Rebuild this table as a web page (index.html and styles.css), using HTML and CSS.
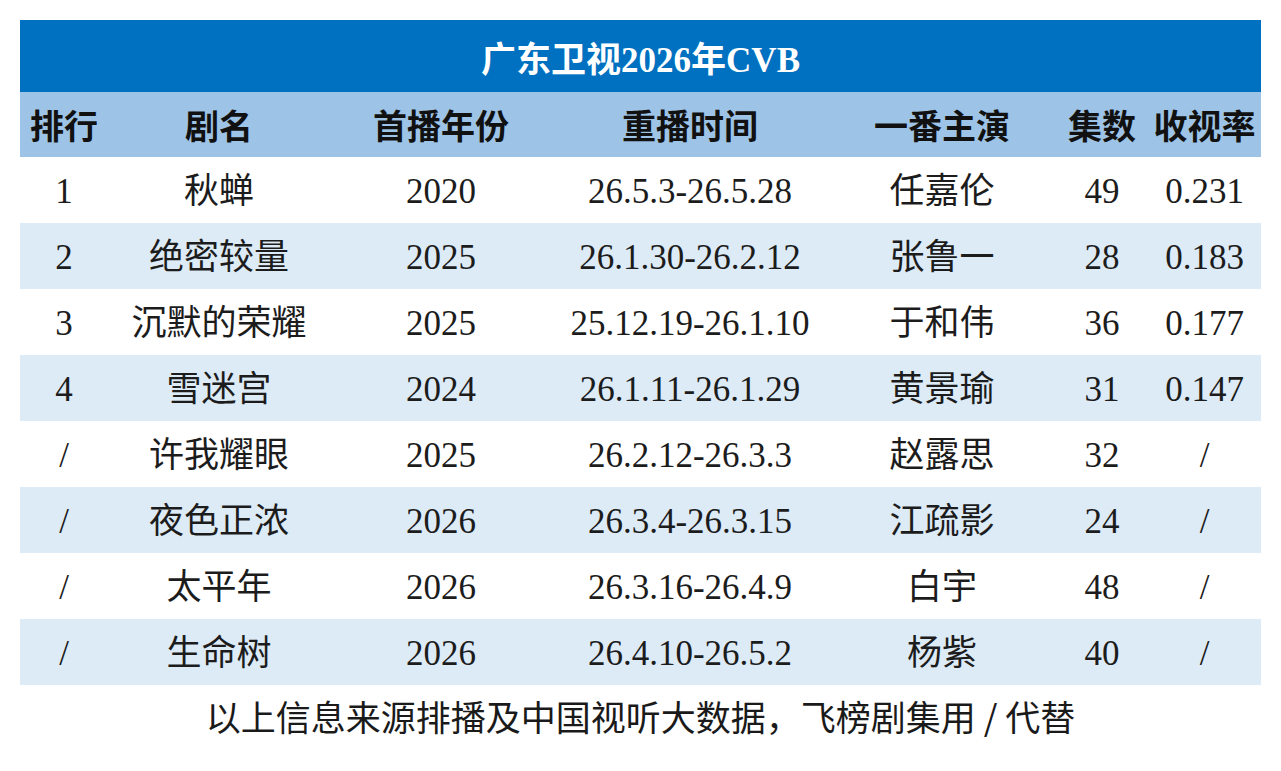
FILE: index.html
```html
<!DOCTYPE html>
<html lang="zh-CN">
<head>
<meta charset="utf-8">
<title>广东卫视2026年CVB</title>
<link rel="stylesheet" href="styles.css">
</head>
<body>
<div class="page">
  <table class="cvb">
    <colgroup>
      <col class="c1"><col class="c2"><col class="c3"><col class="c4"><col class="c5"><col class="c6"><col class="c7">
    </colgroup>
    <thead>
      <tr class="title-row"><th colspan="7">广东卫视2026年CVB</th></tr>
      <tr class="head-row">
        <th>排行</th><th>剧名</th><th>首播年份</th><th>重播时间</th><th>一番主演</th><th>集数</th><th>收视率</th>
      </tr>
    </thead>
    <tbody>
      <tr><td>1</td><td>秋蝉</td><td>2020</td><td>26.5.3-26.5.28</td><td>任嘉伦</td><td>49</td><td>0.231</td></tr>
      <tr class="alt"><td>2</td><td>绝密较量</td><td>2025</td><td>26.1.30-26.2.12</td><td>张鲁一</td><td>28</td><td>0.183</td></tr>
      <tr><td>3</td><td>沉默的荣耀</td><td>2025</td><td>25.12.19-26.1.10</td><td>于和伟</td><td>36</td><td>0.177</td></tr>
      <tr class="alt"><td>4</td><td>雪迷宫</td><td>2024</td><td>26.1.11-26.1.29</td><td>黄景瑜</td><td>31</td><td>0.147</td></tr>
      <tr><td>/</td><td>许我耀眼</td><td>2025</td><td>26.2.12-26.3.3</td><td>赵露思</td><td>32</td><td>/</td></tr>
      <tr class="alt"><td>/</td><td>夜色正浓</td><td>2026</td><td>26.3.4-26.3.15</td><td>江疏影</td><td>24</td><td>/</td></tr>
      <tr><td>/</td><td>太平年</td><td>2026</td><td>26.3.16-26.4.9</td><td>白宇</td><td>48</td><td>/</td></tr>
      <tr class="alt"><td>/</td><td>生命树</td><td>2026</td><td>26.4.10-26.5.2</td><td>杨紫</td><td>40</td><td>/</td></tr>
    </tbody>
  </table>
  <p class="note">以上信息来源排播及中国视听大数据，飞榜剧集用 / 代替</p>
</div>
</body>
</html>
```

FILE: styles.css
```css
html, body {
  margin: 0;
  padding: 0;
  background: #ffffff;
}

.page {
  padding: 20px 20px 0 20px;
}

.cvb {
  border-collapse: collapse;
  table-layout: fixed;
  width: 1241px;
  font-family: "Liberation Serif", "Noto Sans CJK SC", serif;
  font-size: 35px;
  color: #1c1c1c;
}

.c1 { width: 88px; }
.c2 { width: 222px; }
.c3 { width: 222px; }
.c4 { width: 276px; }
.c5 { width: 228px; }
.c6 { width: 92px; }
.c7 { width: 113px; }

.cvb th,
.cvb td {
  padding: 0;
  text-align: center;
  vertical-align: middle;
  white-space: nowrap;
}

.title-row th {
  height: 72px;
  background: #0070c0;
  color: #ffffff;
  font-weight: 700;
  font-family: "Liberation Serif", "Noto Sans CJK SC", serif;
  font-size: 35px;
}

.head-row th {
  height: 65px;
  background: #9dc3e6;
  color: #111111;
  font-family: "Noto Sans CJK SC", sans-serif;
  font-weight: 700;
  font-size: 34px;
}

.cvb tbody td {
  height: 66px;
  box-sizing: border-box;
  padding-top: 3px;
  line-height: 40px;
}

.cvb tbody tr.alt td {
  background: #ddebf7;
}

.note {
  margin: 0;
  width: 1241px;
  text-align: center;
  font-family: "Noto Sans CJK SC", sans-serif;
  font-size: 35px;
  line-height: 50px;
  padding-top: 6px;
  color: #1a1a1a;
}
```
